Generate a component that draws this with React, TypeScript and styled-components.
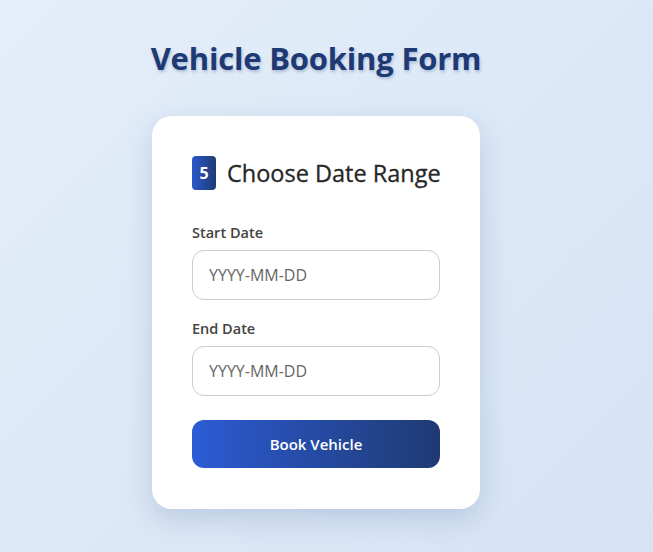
import styled, { createGlobalStyle } from "styled-components";

const GlobalStyle = createGlobalStyle`
  html, body {
    margin: 0;
    padding: 0;
  }
  body {
    font-family: "Open Sans", "Noto Sans", sans-serif;
    background: linear-gradient(135deg, #e4eef9 0%, #d5e3f5 100%);
    min-height: 552px;
  }
`;

const Page = styled.div`
  display: flex;
  flex-direction: column;
  align-items: center;
  padding: 37px 21px 40px 0;
`;

const Title = styled.h1`
  margin: 0 0 37px;
  font-size: 31px;
  font-weight: 700;
  color: #1e3a75;
  text-shadow: 1px 2px 3px rgba(30, 58, 117, 0.25);
  letter-spacing: -0.2px;
`;

const Card = styled.div`
  width: 248px;
  padding: 40px 40px 41px;
  background: #ffffff;
  border-radius: 20px;
  box-shadow: 0 10px 28px rgba(40, 70, 120, 0.18);
`;

const StepHeader = styled.div`
  display: flex;
  align-items: center;
  gap: 11px;
  margin-bottom: 33px;
`;

const StepBadge = styled.span`
  display: inline-flex;
  flex-shrink: 0;
  align-items: center;
  justify-content: center;
  width: 24px;
  height: 34px;
  border-radius: 4px;
  background: linear-gradient(90deg, #2b58c9, #1e3a75);
  color: #fff;
  font-size: 16px;
  font-weight: 700;
`;

const StepTitle = styled.h2`
  margin: 0;
  font-size: 23.5px;
  font-weight: 500;
  color: #262626;
  white-space: nowrap;
  -webkit-text-stroke: 0.3px #262626;
`;

const Field = styled.div`
  display: flex;
  flex-direction: column;
  gap: 8px;
  margin-bottom: 19px;
`;

const Label = styled.label`
  font-size: 14.5px;
  font-weight: 600;
  color: #444;
`;

const Input = styled.input`
  box-sizing: border-box;
  width: 100%;
  height: 50px;
  padding: 0 16px;
  border: 1px solid #cccccc;
  border-radius: 12px;
  font-family: inherit;
  font-size: 16px;
  color: #333;
  outline: none;
  &::placeholder {
    color: #666;
  }
`;

const Button = styled.button`
  width: 100%;
  height: 48px;
  margin-top: 5px;
  border: none;
  border-radius: 12px;
  background: linear-gradient(90deg, #2c5bd4 0%, #1f3a72 100%);
  color: #fff;
  font-family: inherit;
  font-size: 15px;
  font-weight: 600;
  cursor: pointer;
`;

export default function App() {
  return (
    <>
      <GlobalStyle />
      <Page>
        <Title>Vehicle Booking Form</Title>
        <Card>
          <StepHeader>
            <StepBadge>5</StepBadge>
            <StepTitle>Choose Date Range</StepTitle>
          </StepHeader>
          <Field>
            <Label htmlFor="start">Start Date</Label>
            <Input id="start" placeholder="YYYY-MM-DD" />
          </Field>
          <Field>
            <Label htmlFor="end">End Date</Label>
            <Input id="end" placeholder="YYYY-MM-DD" />
          </Field>
          <Button>Book Vehicle</Button>
        </Card>
      </Page>
    </>
  );
}
